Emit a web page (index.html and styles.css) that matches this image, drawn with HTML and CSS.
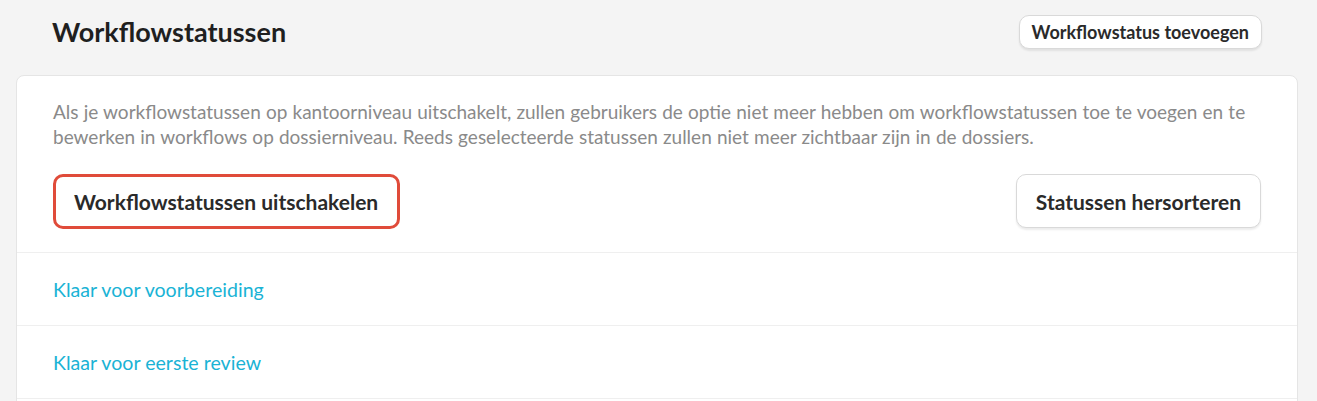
FILE: index.html
```html
<!DOCTYPE html>
<html lang="nl">
<head>
<meta charset="utf-8">
<title>Workflowstatussen</title>
<link rel="stylesheet" href="styles.css">
</head>
<body>
<div class="page">
  <header class="header">
    <h1 class="title">Workflowstatussen</h1>
    <button class="btn btn-small">Workflowstatus toevoegen</button>
  </header>
  <section class="card">
    <div class="intro">
      <p class="desc">Als je workflowstatussen op kantoorniveau uitschakelt, zullen gebruikers de optie niet meer hebben om workflowstatussen toe te voegen en te bewerken in workflows op dossierniveau. Reeds geselecteerde statussen zullen niet meer zichtbaar zijn in de dossiers.</p>
      <div class="actions">
        <button class="btn btn-large btn-highlight">Workflowstatussen uitschakelen</button>
        <button class="btn btn-large">Statussen hersorteren</button>
      </div>
    </div>
    <ul class="list">
      <li class="row"><a class="link" href="#">Klaar voor voorbereiding</a></li>
      <li class="row"><a class="link" href="#">Klaar voor eerste review</a></li>
    </ul>
  </section>
</div>
</body>
</html>
```

FILE: styles.css
```css
* { box-sizing: border-box; }
html, body { margin: 0; padding: 0; }
body {
  background: #f4f4f4;
  font-family: Lato, "Open Sans", sans-serif;
  color: #222;
  overflow: hidden;
  height: 401px;
}
.page {
  padding: 0 19px 0 16px;
}
.header {
  display: flex;
  justify-content: space-between;
  align-items: center;
  padding: 15px 36px 26px;
}
.title {
  margin: 0;
  font-size: 27px;
  font-weight: 700;
  color: #1f1f1f;
  line-height: 34px;
}
.btn {
  font-family: Lato, "Open Sans", sans-serif;
  font-weight: 700;
  color: #2a2a2a;
  background: #fff;
  border: 1px solid #d9d9d9;
  border-radius: 10px;
  box-shadow: 0 2px 2px rgba(0,0,0,0.08);
  cursor: pointer;
}
.btn-small {
  height: 34px;
  padding: 0 12px;
  font-size: 18px;
}
.btn-large {
  height: 54px;
  padding: 0 19px;
  font-size: 21px;
}
.btn-highlight {
  border: 3px solid #e04b3a;
  box-shadow: none;
  padding: 0 19px 0 18px;
  height: 55px;
}
.card {
  background: #fff;
  border: 1px solid #e5e5e5;
  border-radius: 8px;
  min-height: 360px;
}
.intro {
  padding: 23px 36px 23px;
}
.desc {
  margin: 0;
  font-size: 19px;
  line-height: 25px;
  color: #8a8a8a;
  word-spacing: 0.3px;
}
.actions {
  display: flex;
  justify-content: space-between;
  align-items: flex-start;
  margin-top: 25px;
}
.list {
  list-style: none;
  margin: 0;
  padding: 0;
  border-bottom: 1px solid #efefef;
}
.row {
  height: 73px;
  border-top: 1px solid #efefef;
  display: flex;
  align-items: center;
  padding: 0 36px;
}
.link {
  font-size: 19.6px;
  color: #1ab3d5;
  text-decoration: none;
}
```
